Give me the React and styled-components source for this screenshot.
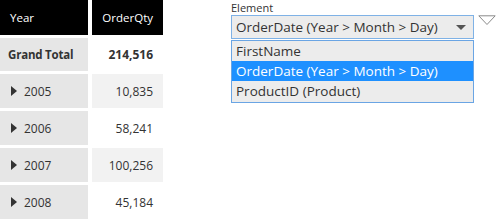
import React from 'react';
import styled, { createGlobalStyle } from 'styled-components';

const Global = createGlobalStyle`
  html, body {
    margin: 0;
    padding: 0;
    background: #ffffff;
  }
  body {
    font-family: "Open Sans", "Noto Sans", sans-serif;
  }
`;

const Page = styled.div`
  display: flex;
  align-items: flex-start;
  width: 497px;
  height: 222px;
  overflow: hidden;
`;

const Table = styled.div`
  display: grid;
  grid-template-columns: 88px 71px;
  grid-auto-rows: 34px;
  column-gap: 4px;
  row-gap: 3px;
  width: 163px;
  flex-shrink: 0;
`;

const HeadCell = styled.div`
  background: #000000;
  color: #ffffff;
  font-size: 11.5px;
  display: flex;
  align-items: center;
  justify-content: ${(p) => (p.$right ? 'flex-end' : 'flex-start')};
  padding: 0 10px;
  height: 35px;
  margin-bottom: 1px;
`;

const RowHead = styled.div`
  background: #e6e6e6;
  color: #333333;
  font-size: ${(p) => (p.$bold ? '11.5px' : '12px')};
  font-weight: ${(p) => (p.$bold ? 700 : 400)};
  letter-spacing: ${(p) => (p.$bold ? '-0.2px' : '0')};
  white-space: nowrap;
  display: flex;
  align-items: center;
  gap: 7px;
  padding: 0 ${(p) => (p.$bold ? '8px' : '11px')};
  margin-top: ${(p) => (p.$first ? '1px' : '0')};
`;

const ValueCell = styled.div`
  background: ${(p) => (p.$shade ? '#f2f2f2' : '#ffffff')};
  color: #333333;
  font-size: 12px;
  font-weight: ${(p) => (p.$bold ? 700 : 400)};
  white-space: nowrap;
  display: flex;
  align-items: center;
  justify-content: flex-end;
  padding: 0 10px;
  margin-top: ${(p) => (p.$first ? '1px' : '0')};
`;

const Arrow = styled.span`
  width: 0;
  height: 0;
  border-top: 5px solid transparent;
  border-bottom: 5px solid transparent;
  border-left: 6px solid #333333;
`;

const Panel = styled.div`
  margin-left: 68px;
  display: flex;
  flex-direction: column;
  padding-top: 1px;
`;

const Label = styled.div`
  font-size: 11px;
  color: #333333;
  height: 14px;
  line-height: 14px;
`;

const SelectRow = styled.div`
  display: flex;
  align-items: flex-start;
`;

const Select = styled.div`
  box-sizing: border-box;
  width: 243px;
  height: 24px;
  border: 1px solid #7fb2e6;
  background: #ececec;
  display: flex;
  align-items: center;
  justify-content: space-between;
  padding: 0 6px 0 4px;
  font-size: 13.5px;
  color: #333333;
  white-space: nowrap;
`;

const Caret = styled.span`
  width: 0;
  height: 0;
  border-left: 5px solid transparent;
  border-right: 5px solid transparent;
  border-top: 5px solid #555555;
  margin-right: 1px;
`;

const Outline = styled.svg`
  margin-left: 4px;
  flex-shrink: 0;
`;

const List = styled.div`
  box-sizing: border-box;
  width: 243px;
  margin-top: 1px;
  border: 1px solid #6aa5e4;
  background: #ececec;
  display: flex;
  flex-direction: column;
  padding-bottom: 1px;
`;

const Option = styled.div`
  height: 20px;
  line-height: 20px;
  font-size: 13.5px;
  padding-left: 4px;
  white-space: nowrap;
  color: ${(p) => (p.$active ? '#ffffff' : '#333333')};
  background: ${(p) => (p.$active ? '#1e90ff' : 'transparent')};
`;

const rows = [
  { year: '2005', qty: '10,835', shade: true },
  { year: '2006', qty: '58,241', shade: false },
  { year: '2007', qty: '100,256', shade: true },
  { year: '2008', qty: '45,184', shade: false },
];

const App = () => (
  <Page>
    <Global />
    <Table>
      <HeadCell>Year</HeadCell>
      <HeadCell $right>OrderQty</HeadCell>
      <RowHead $bold $first>Grand Total</RowHead>
      <ValueCell $bold $first>214,516</ValueCell>
      {rows.map((r) => (
        <React.Fragment key={r.year}>
          <RowHead>
            <Arrow />
            {r.year}
          </RowHead>
          <ValueCell $shade={r.shade}>{r.qty}</ValueCell>
        </React.Fragment>
      ))}
    </Table>
    <Panel>
      <Label>Element</Label>
      <SelectRow>
        <div>
          <Select>
            <span>OrderDate (Year &gt; Month &gt; Day)</span>
            <Caret />
          </Select>
          <List>
            <Option>FirstName</Option>
            <Option $active>OrderDate (Year &gt; Month &gt; Day)</Option>
            <Option>ProductID (Product)</Option>
          </List>
        </div>
        <Outline width="18" height="11" viewBox="0 0 18 11">
          <path d="M0.8 0.8 L17.2 0.8 L9 9.5 Z" fill="none" stroke="#8a8a8a" strokeWidth="1" />
        </Outline>
      </SelectRow>
    </Panel>
  </Page>
);

export default App;
